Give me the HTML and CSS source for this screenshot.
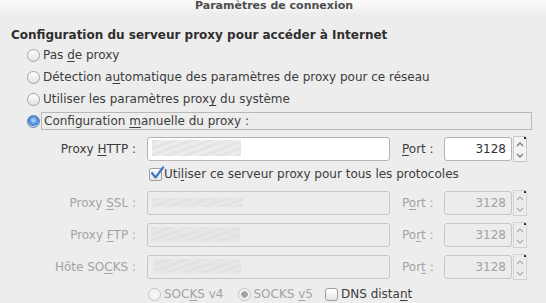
FILE: index.html
```html
<!DOCTYPE html>
<html lang="fr">
<head>
    <meta charset="UTF-8" />
    <title>Paramètres de connexion</title>
    <link rel="stylesheet" href="styles.css">
</head>
<body>
<div class="titlebar">Paramètres de connexion</div>

<div class="content">
    <h1>Configuration du serveur proxy pour accéder à Internet</h1>

    <div class="choices">
        <div class="choice"><span class="radio"></span><span>Pas <u>d</u>e proxy</span></div>
        <div class="choice"><span class="radio"></span><span>Détection a<u>u</u>tomatique des paramètres de proxy pour ce réseau</span></div>
        <div class="choice"><span class="radio"></span><span>Utiliser les paramètres prox<u>y</u> du système</span></div>
        <div class="choice"><span class="radio on"></span><span class="focus">Configuration <u>m</u>anuelle du proxy :</span></div>
    </div>

    <div class="form">
        <div class="row">
            <span class="lbl">Proxy <u>H</u>TTP :</span>
            <span class="field"><span class="blur blur-http"></span></span>
            <span class="port-lbl"><u>P</u>ort :</span>
            <span class="port">3128</span>
            <span class="spin">
                <svg width="14" height="26" viewBox="0 0 14 26"><path d="M4 10 L7 7 L10 10" fill="none" stroke="#7a7a7a" stroke-width="1.3"/><path d="M4 18 L7 21 L10 18" fill="none" stroke="#7a7a7a" stroke-width="1.3"/></svg>
            </span>
        </div>

        <div class="row row-check">
            <span class="check on">
                <svg width="16" height="15" viewBox="0 0 16 15"><path d="M3 7 L6.5 11.5 L14 1.5" fill="none" stroke="#3b79c9" stroke-width="2.2" stroke-linecap="round" stroke-linejoin="round"/></svg>
            </span>
            <span>Uti<u>l</u>iser ce serveur proxy pour tous les protocoles</span>
        </div>

        <div class="row off">
            <span class="lbl">Proxy <u>S</u>SL :</span>
            <span class="field"><span class="blur blur-ssl"></span></span>
            <span class="port-lbl">P<u>o</u>rt :</span>
            <span class="port">3128</span>
            <span class="spin">
                <svg width="14" height="26" viewBox="0 0 14 26"><path d="M4 10 L7 7 L10 10" fill="none" stroke="#b0b0b0" stroke-width="1.3"/><path d="M4 18 L7 21 L10 18" fill="none" stroke="#b0b0b0" stroke-width="1.3"/></svg>
            </span>
        </div>

        <div class="row off">
            <span class="lbl">Proxy <u>F</u>TP :</span>
            <span class="field"><span class="blur blur-ftp"></span></span>
            <span class="port-lbl">Po<u>r</u>t :</span>
            <span class="port">3128</span>
            <span class="spin">
                <svg width="14" height="26" viewBox="0 0 14 26"><path d="M4 10 L7 7 L10 10" fill="none" stroke="#b0b0b0" stroke-width="1.3"/><path d="M4 18 L7 21 L10 18" fill="none" stroke="#b0b0b0" stroke-width="1.3"/></svg>
            </span>
        </div>

        <div class="row off">
            <span class="lbl">Hôte SO<u>C</u>KS :</span>
            <span class="field"><span class="blur blur-socks"></span></span>
            <span class="port-lbl">Por<u>t</u> :</span>
            <span class="port">3128</span>
            <span class="spin">
                <svg width="14" height="26" viewBox="0 0 14 26"><path d="M4 10 L7 7 L10 10" fill="none" stroke="#b0b0b0" stroke-width="1.3"/><path d="M4 18 L7 21 L10 18" fill="none" stroke="#b0b0b0" stroke-width="1.3"/></svg>
            </span>
        </div>

        <div class="row row-socks">
            <span class="opt off"><span class="radio"></span><span>SOC<u>K</u>S v4</span></span>
            <span class="opt off"><span class="radio dot"></span><span>SOCKS <u>v</u>5</span></span>
            <span class="opt"><span class="check"></span><span>DNS dista<u>n</u>t</span></span>
        </div>
    </div>
</div>
</body>
</html>
```

FILE: styles.css
```css
:root {
    --bg: #ededed;
    --text: #3c3c3c;
    --text-off: #a3a3a3;
    --border: #b4b4b4;
    --border-off: #c6c6c6;
}

body {
    margin: 0;
    background: var(--bg);
    color: var(--text);
    font-family: 'DejaVu Sans', Verdana, sans-serif;
    font-size: 12px;
    overflow: hidden;
}

u {
    text-decoration-thickness: 1px;
    text-underline-offset: 2px;
}

.titlebar {
    height: 16px;
    line-height: 12px;
    text-align: center;
    font-size: 11px;
    font-weight: bold;
    color: #4d4d4d;
    background: linear-gradient(#fbfbfb, #ededed 15px);
    padding-left: 2px;
}

.content {
    padding-left: 11px;
}

h1 {
    margin: 11px 0 0;
    font-size: 12px;
    font-weight: bold;
    line-height: 16px;
    color: #2f2f2f;
}

.choices {
    margin-top: 1px;
    padding-left: 16px;
}

.choice {
    height: 22px;
    display: flex;
    align-items: center;
}

/* radios and checkboxes */
.radio {
    box-sizing: border-box;
    width: 13px;
    height: 13px;
    border-radius: 50%;
    border: 1px solid #a3a3a3;
    background: linear-gradient(#ffffff, #e2e2e2);
    margin-right: 3px;
    flex: none;
}

.radio.on {
    border-color: #5f7fa8;
    background: radial-gradient(circle at 50% 40%, #bfdcff 0, #6aa3ea 3px, #3c78cf 5px, #d7e3f2 6px);
}

.radio.dot {
    background: radial-gradient(circle, #9c9c9c 0 3px, #f4f4f4 3.6px);
}

.off .radio {
    border-color: #c2c2c2;
    background: #f4f4f4;
}

.off .radio.dot {
    background: radial-gradient(circle, #a4a4a4 0 3px, #f4f4f4 3.6px);
}

.focus {
    flex: 1;
    margin-right: 14px;
    margin-left: -2px;
    padding-left: 2px;
    height: 16px;
    line-height: 16px;
    border: 1px solid #b9b9b9;
}

.check {
    position: relative;
    box-sizing: border-box;
    width: 13px;
    height: 13px;
    border: 1px solid #9e9e9e;
    border-radius: 2px;
    background: linear-gradient(#ffffff, #e6e6e6);
    margin-right: 2px;
    flex: none;
}

.check svg {
    position: absolute;
    left: -1px;
    top: -3px;
}

/* proxy form */
.form {
    margin-top: 5px;
}

.row {
    display: flex;
    align-items: center;
    height: 24px;
    margin-bottom: 8px;
}

.lbl {
    width: 125px;
    text-align: right;
    margin-right: 11px;
}

.field {
    box-sizing: border-box;
    width: 243px;
    height: 24px;
    border: 1px solid var(--border);
    border-radius: 3px;
    background: #ffffff;
    margin-right: 12px;
    position: relative;
}

.blur {
    position: absolute;
    background: repeating-linear-gradient(-20deg, #e4e4e4 0 3px, #ececec 3px 6px);
}

.blur-http { left: 4px; top: 2px; width: 89px; height: 16px; }
.blur-ssl { left: 4px; top: 6px; width: 91px; height: 9px; }
.blur-ftp { left: 3px; top: 3px; width: 89px; height: 15px; }
.blur-socks { left: 6px; top: 3px; width: 87px; height: 14px; }

.port-lbl {
    width: 42px;
}

.port {
    box-sizing: border-box;
    width: 68px;
    height: 24px;
    line-height: 22px;
    border: 1px solid var(--border);
    border-radius: 3px;
    background: #ffffff;
    text-align: right;
    padding-right: 5px;
    color: #333;
}

.spin {
    box-sizing: border-box;
    width: 14px;
    height: 26px;
    margin-left: 1px;
    border: 1px solid #c8c8c8;
    border-top-right-radius: 2px;
    background: #f3f3f3;
    position: relative;
    overflow: hidden;
}

.spin svg {
    position: absolute;
    left: -1px;
    top: -1px;
}

.spin::after {
    content: "";
    position: absolute;
    right: 0;
    top: 0;
    width: 2px;
    height: 2px;
    background: #222;
}

.row.off {
    color: var(--text-off);
}

.row.off .field,
.row.off .port {
    background: #ececec;
    border-color: var(--border-off);
    color: var(--text-off);
}

.row.off .blur {
    background: repeating-linear-gradient(-20deg, #e2e2e2 0 3px, #e7e7e7 3px 6px);
}

.row.off .spin {
    border-color: #d2d2d2;
    background: #ededed;
}

.row-check {
    height: 26px;
    margin-top: -8px;
    margin-bottom: 4px;
    padding-left: 138px;
}

.row-socks {
    height: 22px;
    margin-top: -4px;
    padding-left: 137px;
}

.opt {
    display: flex;
    align-items: center;
    margin-right: 14px;
}

.opt .radio {
    margin-right: 3px;
}

.opt:nth-child(2) {
    margin-right: 12px;
}

.opt .check {
    border-radius: 3px;
    margin-right: 3px;
}

.opt.off {
    color: var(--text-off);
}
```
